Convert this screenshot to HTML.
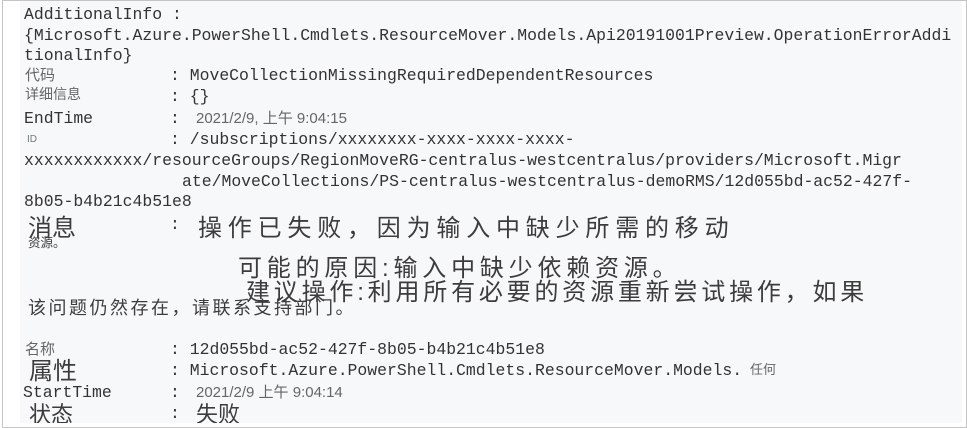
<!DOCTYPE html>
<html><head><meta charset="utf-8"><style>
html,body{margin:0;padding:0;background:#fff;width:967px;height:428px;overflow:hidden}
.frame{position:absolute;left:2px;top:0;width:963px;height:426px;border:1px solid #c4c4c4;border-right:2px solid #c4c4c4}
.panel{position:absolute;left:20px;top:1px;width:942px;height:422px;background:#f7f8fa;overflow:hidden}
.t{position:absolute;white-space:pre;color:#333;line-height:1}
.m{font-family:"Liberation Mono","DejaVu Sans Mono",monospace;font-size:16.45px}
.c{font-family:"Liberation Sans","Noto Sans CJK SC",sans-serif;color:#3c3c3c}
.d{font-family:"Liberation Sans","Noto Sans CJK SC",sans-serif;color:#666;font-size:15px}
</style></head><body>
<div class="frame"></div>
<div class="panel">
<div class="t m" style="left:4px;top:6px">AdditionalInfo :</div>
<div class="t m" style="left:4px;top:27px">{Microsoft.Azure.PowerShell.Cmdlets.ResourceMover.Models.Api20191001Preview.OperationErrorAddi</div>
<div class="t m" style="left:4px;top:47px">tionalInfo}</div>
<div class="t c" style="left:5px;top:67px;font-size:15px;color:#666">代码</div>
<div class="t m" style="left:150px;top:67px">: MoveCollectionMissingRequiredDependentResources</div>
<div class="t c" style="left:5px;top:86px;font-size:14px;color:#666">详细信息</div>
<div class="t m" style="left:150px;top:88px">: {}</div>
<div class="t m" style="left:4px;top:110px">EndTime</div>
<div class="t m" style="left:150px;top:110px">:</div>
<div class="t d" style="left:176px;top:110px">2021/2/9, 上午 9:04:15</div>
<div class="t c" style="left:7px;top:134px;font-size:10px;color:#777">ID</div>
<div class="t m" style="left:150px;top:131px">: /subscriptions/xxxxxxxx-xxxx-xxxx-xxxx-</div>
<div class="t m" style="left:4px;top:152px">xxxxxxxxxxxx/resourceGroups/RegionMoveRG-centralus-westcentralus/providers/Microsoft.Migr</div>
<div class="t m" style="left:162px;top:173px">ate/MoveCollections/PS-centralus-westcentralus-demoRMS/12d055bd-ac52-427f-</div>
<div class="t m" style="left:4px;top:193px">8b05-b4b21c4b51e8</div>
<div class="t c" style="left:8px;top:216px;font-size:24px">消息</div>
<div class="t m" style="left:150px;top:216px">:</div>
<div class="t c" style="left:178px;top:216px;font-size:24px;letter-spacing:5.8px">操作已失败，因为输入中缺少所需的移动</div>
<div class="t c" style="left:8px;top:236px;font-size:12.5px">资源。</div>
<div class="t c" style="left:218px;top:256px;font-size:24px;letter-spacing:4.8px">可能的原因:输入中缺少依赖资源。</div>
<div class="t c" style="left:226px;top:280px;font-size:24px;letter-spacing:3.8px">建议操作:利用所有必要的资源重新尝试操作，如果</div>
<div class="t c" style="left:8px;top:298px;font-size:18px;letter-spacing:2.5px">该问题仍然存在，请联系支持部门。</div>
<div class="t c" style="left:5px;top:341px;font-size:15px;color:#666">名称</div>
<div class="t m" style="left:150px;top:341px">: 12d055bd-ac52-427f-8b05-b4b21c4b51e8</div>
<div class="t c" style="left:9px;top:359px;font-size:24px">属性</div>
<div class="t m" style="left:150px;top:362px">: Microsoft.Azure.PowerShell.Cmdlets.ResourceMover.Models.</div>
<div class="t c" style="left:730px;top:362px;font-size:13px;color:#666">任何</div>
<div class="t m" style="left:3px;top:384px">StartTime</div>
<div class="t m" style="left:150px;top:384px">:</div>
<div class="t d" style="left:176px;top:384px">2021/2/9 上午 9:04:14</div>
<div class="t c" style="left:9px;top:403px;font-size:22px">状态</div>
<div class="t m" style="left:150px;top:405px">:</div>
<div class="t c" style="left:176px;top:403px;font-size:22px">失败</div>
</div>
</body></html>
